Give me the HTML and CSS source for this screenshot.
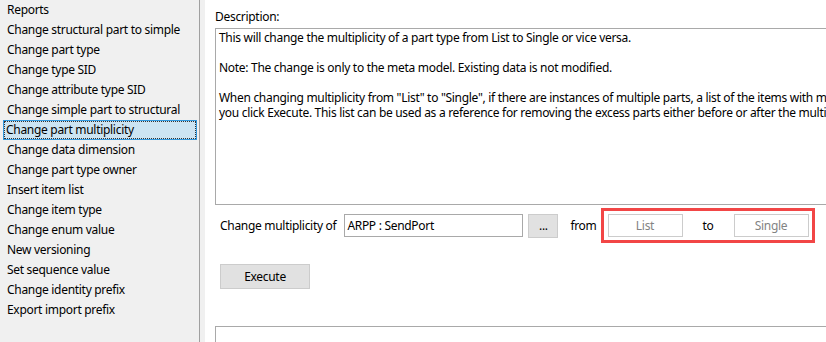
FILE: index.html
```html
<!DOCTYPE html>
<html lang="en">
<head>
    <meta charset="UTF-8">
    <title>Meta Model Tools</title>
    <link rel="stylesheet" href="styles.css">
</head>
<body>
    <div class="window">
        <ul class="tool-list">
            <li>Reports</li>
            <li>Change structural part to simple</li>
            <li>Change part type</li>
            <li>Change type SID</li>
            <li>Change attribute type SID</li>
            <li>Change simple part to structural</li>
            <li class="selected"><span>Change part multiplicity</span></li>
            <li>Change data dimension</li>
            <li>Change part type owner</li>
            <li>Insert item list</li>
            <li>Change item type</li>
            <li>Change enum value</li>
            <li>New versioning</li>
            <li>Set sequence value</li>
            <li>Change identity prefix</li>
            <li>Export import prefix</li>
        </ul>
        <div class="splitter"></div>
        <div class="main">
            <div class="desc-label">Description:</div>
            <div class="description">
<div class="line">This will change the multiplicity of a part type from List to Single or vice versa.</div>
<div class="line">&nbsp;</div>
<div class="line">Note: The change is only to the meta model. Existing data is not modified.</div>
<div class="line">&nbsp;</div>
<div class="line">When changing multiplicity from "List" to "Single", if there are instances of multiple parts, a list of the items with multiple parts will be displayed when</div>
<div class="line">you click Execute. This list can be used as a reference for removing the excess parts either before or after the multiplicity change.</div>
            </div>

            <div class="form-row">
                <span class="label">Change multiplicity of</span>
                <div class="text-input">ARPP : SendPort</div>
                <button class="btn browse">...</button>
                <span class="label from">from</span>
                <div class="highlight">
                    <button class="btn disabled">List</button>
                    <span class="label to">to</span>
                    <button class="btn disabled">Single</button>
                </div>
            </div>

            <button class="btn execute">Execute</button>

            <div class="output"></div>
        </div>
    </div>
</body>
</html>
```

FILE: styles.css
```css
body {
    margin: 0;
    font-family: "Noto Sans", "Open Sans", sans-serif;
    font-size: 12px;
    letter-spacing: -0.3px;
    color: #000;
    background: #fff;
}
.window {
    display: flex;
    width: 826px;
    height: 342px;
    overflow: hidden;
}
.tool-list {
    width: 199px;
    flex: none;
    margin: 0;
    padding: 0;
    list-style: none;
    background-color: #f0f0f0;
    border-right: 1px solid #a0a0a0;
}
.tool-list li {
    height: 20px;
    line-height: 20px;
    padding-left: 7px;
    white-space: nowrap;
}
.tool-list li.selected {
    padding: 0 2px 0 3px;
}
.tool-list li.selected span {
    display: block;
    height: 20px;
    line-height: 18px;
    padding-left: 2px;
    border: 1px solid #3399dd;
    background-color: #cce4f2;
    outline: 1px dotted #333;
    outline-offset: -2px;
    box-sizing: border-box;
}
.splitter {
    width: 5px;
    flex: none;
    background-color: #f0f0f0;
}
.main {
    flex: 1;
    min-width: 0;
    padding-left: 10px;
    overflow: hidden;
}
.desc-label {
    padding-top: 10px;
    line-height: 14px;
    margin-bottom: 4px;
}
.description {
    width: 700px;
    height: 174px;
    padding: 1px 0 0 3px;
    border: 1px solid #a9a9a9;
    border-right: none;
    box-sizing: content-box;
    overflow: hidden;
}
.description .line {
    line-height: 15px;
    white-space: pre;
}
.form-row {
    display: flex;
    align-items: center;
    margin-top: 3px;
    padding-left: 5px;
}
.label {
    white-space: nowrap;
}
.text-input {
    width: 175px;
    height: 21px;
    line-height: 21px;
    margin-left: 8px;
    padding-left: 2px;
    border: 1px solid #a9a9a9;
    box-sizing: content-box;
}
.btn {
    font-family: inherit;
    font-size: 12px;
    letter-spacing: inherit;
    color: #000;
    background-color: #e1e1e1;
    border: 1px solid #cccccc;
    padding: 0;
}
.browse {
    width: 30px;
    height: 24px;
    margin-left: 5px;
}
.from {
    margin-left: 12px;
}
.highlight {
    display: flex;
    align-items: center;
    height: 29px;
    margin-left: 4px;
    padding: 0 3px 0 4px;
    border: 3px solid #f24646;
}
.disabled {
    width: 75px;
    height: 23px;
    color: #838383;
    background-color: #fff;
    border-color: #cccccc;
}
.to {
    margin: 0 20px;
}
.execute {
    display: block;
    width: 90px;
    height: 25px;
    margin: 21px 0 0 5px;
}
.output {
    width: 700px;
    height: 40px;
    margin-top: 37px;
    border: 1px solid #a9a9a9;
    border-right: none;
}
```
